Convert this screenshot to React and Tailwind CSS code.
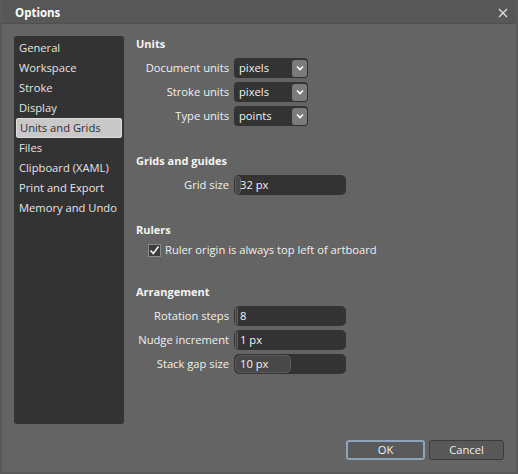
import React from "react";

const font = { fontFamily: '"Open Sans", "Noto Sans", sans-serif' };

function Chevron() {
  return (
    <svg width="8" height="6" viewBox="0 0 8 6" fill="none">
      <path d="M1 1.5 L4 4.5 L7 1.5" stroke="#ffffff" strokeWidth="1.6" />
    </svg>
  );
}

function Select({ value }) {
  return (
    <div className="w-[74px] h-[20px] bg-[#333333] rounded-[4px] flex items-center pl-[5px] pr-[1px]">
      <span className="flex-1 text-[#f2f2f2] leading-none">{value}</span>
      <div className="w-[15px] h-[17px] rounded-[3px] bg-[#7b7b7b] flex items-center justify-center">
        <Chevron />
      </div>
    </div>
  );
}

function Slider({ value, thumb }) {
  return (
    <div className="relative w-[112px] h-[20px] bg-[#333333] rounded-[5px] flex items-center">
      <div
        className="absolute left-[1px] top-[1px] bottom-[1px] rounded-[5px] bg-[#484848] border border-[#5c5c5c]"
        style={{ width: thumb }}
      />
      <span className="relative pl-[6px] text-[#f2f2f2] leading-none">{value}</span>
    </div>
  );
}

function Row({ label, children }) {
  return (
    <div className="flex items-center h-[20px]">
      <div className="w-[94px] text-right pr-[1px] text-[#f0f0f0] leading-none whitespace-nowrap">{label}</div>
      <div className="ml-[4px]">{children}</div>
    </div>
  );
}

function Heading({ children, className = "" }) {
  return <div className={"h-[16px] leading-[16px] font-bold text-[11px] text-[#f4f4f4] " + className}>{children}</div>;
}

export default function App() {
  const items = [
    "General",
    "Workspace",
    "Stroke",
    "Display",
    "Units and Grids",
    "Files",
    "Clipboard (XAML)",
    "Print and Export",
    "Memory and Undo",
  ];
  return (
    <div
      className="w-[518px] h-[474px] bg-[#646464] text-[11.2px] flex flex-col border-l-2 border-r-2 border-b-2 border-[#5a5a5a] overflow-hidden"
      style={font}
    >
      <div className="h-[24px] bg-[#575757] border-b border-[#505050] flex items-center justify-between pl-[13px] pr-[8px] pt-[3px]">
        <span className="font-bold text-white text-[11.5px]">Options</span>
        <svg width="10" height="10" viewBox="0 0 10 10">
          <path d="M1 1 L9 9 M9 1 L1 9" stroke="#dcdcdc" strokeWidth="1.4" />
        </svg>
      </div>
      <div className="flex pl-[12px] pt-[12px]">
        <div className="w-[110px] h-[388px] bg-[#333333] rounded-[3px] pt-[2px] flex flex-col">
          {items.map((it) =>
            it === "Units and Grids" ? (
              <div
                key={it}
                className="mx-[2px] h-[20px] flex items-center pl-[3px] bg-[#c8c8c8] border border-[#dedede] rounded-[2px] text-[#2e2e2e]"
              >
                {it}
              </div>
            ) : (
              <div key={it} className="h-[20px] flex items-center pl-[5px] text-[#e4e4e4]">
                {it}
              </div>
            )
          )}
        </div>
        <div className="ml-[12px] flex flex-col">
          <Heading>Units</Heading>
          <div className="mt-[6px] flex flex-col gap-[4px]">
            <Row label="Document units"><Select value="pixels" /></Row>
            <Row label="Stroke units"><Select value="pixels" /></Row>
            <Row label="Type units"><Select value="points" /></Row>
          </div>
          <Heading className="mt-[27px]">Grids and guides</Heading>
          <div className="mt-[6px]">
            <Row label="Grid size"><Slider value="32 px" thumb={6} /></Row>
          </div>
          <Heading className="mt-[27px]">Rulers</Heading>
          <div className="mt-[4px] h-[16px] flex items-center pl-[12px]">
            <div className="w-[13px] h-[13px] border border-[#8a8a8a] bg-[#3c3c3c] flex items-center justify-center">
              <svg width="11" height="11" viewBox="0 0 11 11">
                <path d="M1.5 5.5 L4.3 8.5 L9.5 1.5" stroke="#f2f2f2" strokeWidth="1.6" fill="none" />
              </svg>
            </div>
            <span className="ml-[4px] text-[#f0f0f0]">Ruler origin is always top left of artboard</span>
          </div>
          <Heading className="mt-[26px]">Arrangement</Heading>
          <div className="mt-[6px] flex flex-col gap-[4px]">
            <Row label="Rotation steps"><Slider value="8" thumb={3} /></Row>
            <Row label="Nudge increment"><Slider value="1 px" thumb={3} /></Row>
            <Row label="Stack gap size"><Slider value="10 px" thumb={56} /></Row>
          </div>
        </div>
      </div>
      <div className="flex justify-end gap-[4px] pr-[12px] mt-[16px]">
        <button className="w-[79px] h-[20px] rounded-[3px] bg-[#5a5a5a] border-2 border-[#8ea3ba] text-[#f0f0f0] flex items-center justify-center leading-none">
          OK
        </button>
        <button className="w-[75px] h-[20px] rounded-[3px] bg-[#585858] border border-[#3c3c3c] text-[#f0f0f0] flex items-center justify-center leading-none">
          Cancel
        </button>
      </div>
    </div>
  );
}
